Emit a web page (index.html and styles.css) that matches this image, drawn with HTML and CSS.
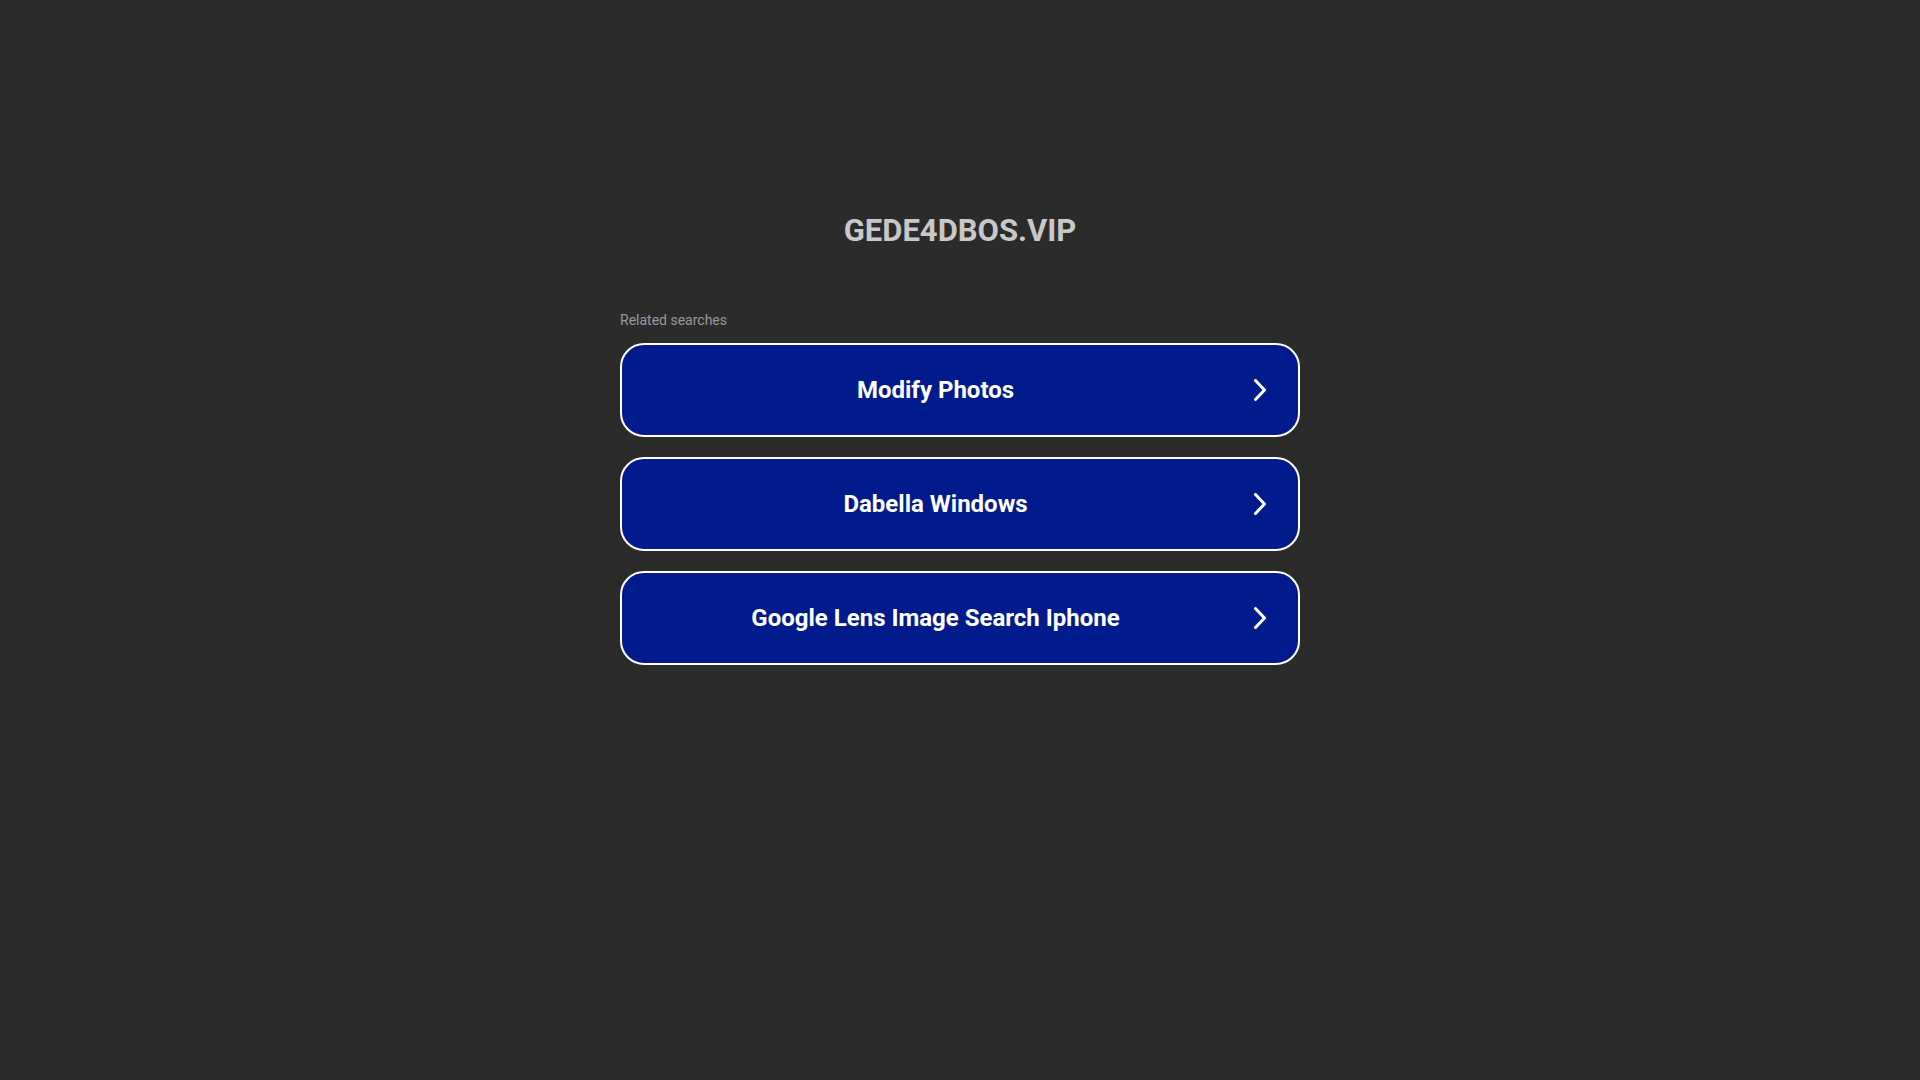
FILE: index.html
```html
<!DOCTYPE html>
<html lang="en">
<head>
<meta charset="utf-8">
<title>gede4dbos.vip</title>
<link rel="stylesheet" href="styles.css">
</head>
<body>
<main class="container">
  <h1 class="domain">GEDE4DBOS.VIP</h1>
  <section class="related">
    <p class="related-title">Related searches</p>
    <ul class="links">
      <li><a class="link" href="#"><span class="link-text">Modify Photos</span><svg class="chev" width="12" height="22" viewBox="0 0 12 22"><polyline points="1.5,1.5 10.5,11 1.5,20.5" fill="none" stroke="#fff" stroke-width="3" stroke-linecap="round" stroke-linejoin="round"/></svg></a></li>
      <li><a class="link" href="#"><span class="link-text">Dabella Windows</span><svg class="chev" width="12" height="22" viewBox="0 0 12 22"><polyline points="1.5,1.5 10.5,11 1.5,20.5" fill="none" stroke="#fff" stroke-width="3" stroke-linecap="round" stroke-linejoin="round"/></svg></a></li>
      <li><a class="link" href="#"><span class="link-text">Google Lens Image Search Iphone</span><svg class="chev" width="12" height="22" viewBox="0 0 12 22"><polyline points="1.5,1.5 10.5,11 1.5,20.5" fill="none" stroke="#fff" stroke-width="3" stroke-linecap="round" stroke-linejoin="round"/></svg></a></li>
    </ul>
  </section>
</main>
</body>
</html>
```

FILE: styles.css
```css
html, body {
  margin: 0;
  padding: 0;
  background: #2b2b2b;
  font-family: Roboto, "Liberation Sans", Arial, sans-serif;
}

.container {
  width: 680px;
  margin: 0 auto;
  padding-top: 213px;
}

.domain {
  margin: 0;
  font-size: 31px;
  line-height: 36px;
  font-weight: 700;
  letter-spacing: 0;
  color: #c8c8c8;
  text-align: center;
}

.related {
  margin-top: 63px;
}

.related-title {
  margin: 0 0 15px 0;
  font-size: 14px;
  line-height: 16px;
  color: #9a9a9a;
}

.links {
  list-style: none;
  margin: 0;
  padding: 0;
  display: flex;
  flex-direction: column;
  gap: 20px;
}

.link {
  display: flex;
  align-items: center;
  box-sizing: border-box;
  height: 94px;
  border: 2px solid #ffffff;
  border-radius: 24px;
  background: #021b8c;
  color: #ffffff;
  text-decoration: none;
}

.link-text {
  flex: 1;
  text-align: center;
  font-size: 24px;
  font-weight: 700;
  line-height: 28px;
}

.chev {
  flex: none;
  margin: 0 32px 0 5px;
}
```
